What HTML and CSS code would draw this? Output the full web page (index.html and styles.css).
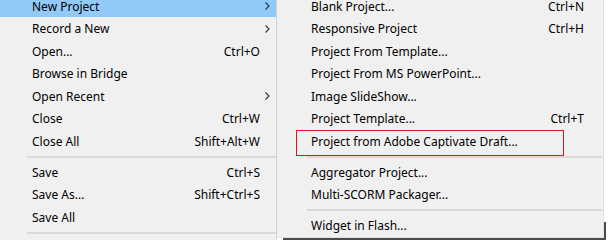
FILE: index.html
```html
<!DOCTYPE html>
<html>
<head>
  <title>File Menu</title>
  <link rel="stylesheet" href="styles.css">
</head>
<body>

<div class="menus">
  <ul class="menu main">
    <li class="item active"><span class="label">New Project</span><span class="key"></span><span class="arrow"><svg width="5" height="8" viewBox="0 0 5 8"><path d="M0.5 0.5 L4 4 L0.5 7.5" fill="none" stroke="#333" stroke-width="1.1"/></svg></span></li>
    <li class="item"><span class="label">Record a New</span><span class="key"></span><span class="arrow"><svg width="5" height="8" viewBox="0 0 5 8"><path d="M0.5 0.5 L4 4 L0.5 7.5" fill="none" stroke="#333" stroke-width="1.1"/></svg></span></li>
    <li class="item"><span class="label">Open...</span><span class="key">Ctrl+O</span><span class="arrow"></span></li>
    <li class="item"><span class="label">Browse in Bridge</span><span class="key"></span><span class="arrow"></span></li>
    <li class="item"><span class="label">Open Recent</span><span class="key"></span><span class="arrow"><svg width="5" height="8" viewBox="0 0 5 8"><path d="M0.5 0.5 L4 4 L0.5 7.5" fill="none" stroke="#333" stroke-width="1.1"/></svg></span></li>
    <li class="item"><span class="label">Close</span><span class="key">Ctrl+W</span><span class="arrow"></span></li>
    <li class="item"><span class="label">Close All</span><span class="key">Shift+Alt+W</span><span class="arrow"></span></li>
    <li class="sep"></li>
    <li class="item"><span class="label">Save</span><span class="key">Ctrl+S</span><span class="arrow"></span></li>
    <li class="item"><span class="label">Save As...</span><span class="key">Shift+Ctrl+S</span><span class="arrow"></span></li>
    <li class="item"><span class="label">Save All</span><span class="key"></span><span class="arrow"></span></li>
    <li class="sep"></li>
  </ul>

  <ul class="menu sub">
    <li class="item"><span class="label">Blank Project...</span><span class="key">Ctrl+N</span></li>
    <li class="item"><span class="label">Responsive Project</span><span class="key">Ctrl+H</span></li>
    <li class="item"><span class="label">Project From Template...</span><span class="key"></span></li>
    <li class="item"><span class="label">Project From MS PowerPoint...</span><span class="key"></span></li>
    <li class="item"><span class="label">Image SlideShow...</span><span class="key"></span></li>
    <li class="item"><span class="label">Project Template...</span><span class="key">Ctrl+T</span></li>
    <li class="item marked"><span class="label">Project from Adobe Captivate Draft...</span><span class="key"></span></li>
    <li class="sep"></li>
    <li class="item"><span class="label">Aggregator Project...</span><span class="key"></span></li>
    <li class="item"><span class="label">Multi-SCORM Packager...</span><span class="key"></span></li>
    <li class="sep"></li>
    <li class="item"><span class="label">Widget in Flash...</span><span class="key"></span></li>
  </ul>
</div>

</body>
</html>
```

FILE: styles.css
```css
body {
  margin: 0;
  background: #ffffff;
  font-family: 'Noto Sans', 'Open Sans', sans-serif;
  font-size: 12px;
  color: #000;
  overflow: hidden;
}

.menus {
  display: flex;
  align-items: flex-start;
  margin-top: -5.25px;
}

.menu {
  list-style: none;
  margin: 0;
  padding: 0;
  background: #f0f0f0;
}

.main {
  width: 276px;
  padding-bottom: 20px;
  border-right: 1px solid #d2d2d2;
}

.sub {
  position: relative;
  width: 326px;
  border-right: 1px solid #e2e2e2;
  border-bottom: 1px solid #e2e2e2;
}

/* dark edge of whatever sits behind the submenu */
.sub::before {
  content: "";
  position: absolute;
  left: 6px;
  right: -3px;
  bottom: -5px;
  height: 4px;
  background: #4b4b4b;
}

.sub::after {
  content: "";
  position: absolute;
  right: -3px;
  bottom: -5px;
  width: 2px;
  height: 20px;
  background: #4b4b4b;
}

.item {
  display: flex;
  align-items: center;
  height: 22.5px;
  white-space: nowrap;
}

.main .item {
  padding-left: 32px;
}

.sub .item {
  padding-left: 34px;
  padding-right: 19px;
}

.item .label {
  flex: 1;
}

.main .arrow {
  width: 16px;
  display: flex;
  justify-content: flex-end;
  padding-right: 6px;
  box-sizing: border-box;
}

.item.active {
  background: #91c9f7;
}

.sep {
  height: 8.5px;
  display: flex;
  align-items: center;
}

.sep::before {
  content: "";
  display: block;
  width: 100%;
  height: 2px;
  background: #dadada;
}

.main .sep {
  padding-left: 27px;
}

.sub .sep {
  padding-left: 30px;
  padding-right: 1px;
}

.marked {
  position: relative;
}

.marked::after {
  content: "";
  position: absolute;
  left: 19px;
  top: 0;
  width: 268px;
  height: 26px;
  border: 1.5px solid #e3141d;
  box-sizing: border-box;
}
```
